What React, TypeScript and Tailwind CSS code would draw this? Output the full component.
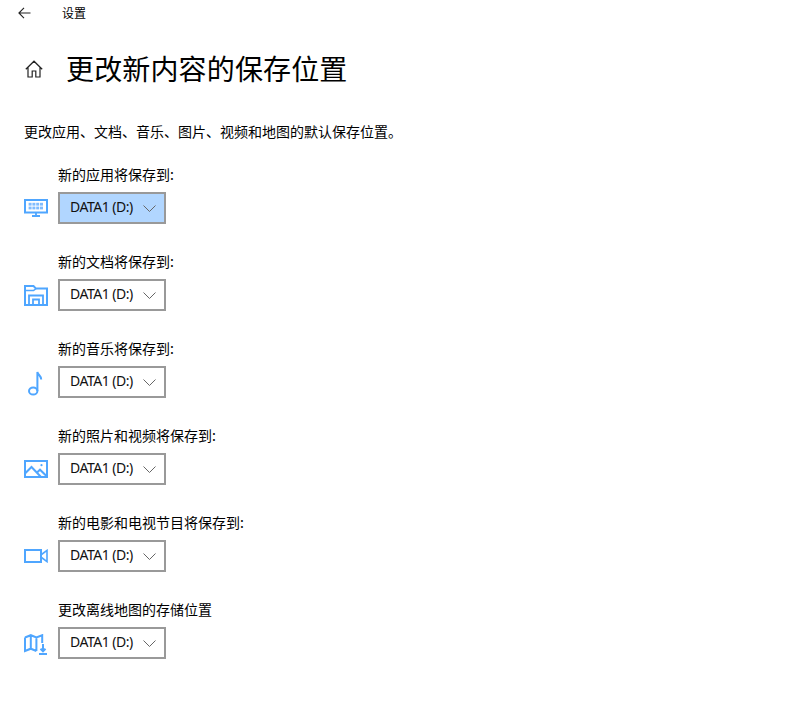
const CJK = "font-['Noto_Sans_CJK_SC','Noto_Sans',sans-serif]";

const stroke = { fill: "none", stroke: "#4fa6ff", strokeWidth: 2 };

const Pc = () => (
  <svg width="24" height="18" viewBox="0 0 24 18" fill="none">
    <rect x="1" y="1" width="22" height="12.5" stroke="#4fa6ff" strokeWidth="2" />
    <path d="M12 14v3M8 17h8" stroke="#4fa6ff" strokeWidth="1.8" />
    <g fill="#7fbcff">
      <rect x="4.6" y="3.8" width="3" height="2.8" />
      <rect x="8.4" y="3.8" width="3" height="2.8" />
      <rect x="12.2" y="3.8" width="3" height="2.8" />
      <rect x="16" y="3.8" width="3" height="2.8" />
      <rect x="4.6" y="7.6" width="3" height="2.8" />
      <rect x="8.4" y="7.6" width="3" height="2.8" />
      <rect x="12.2" y="7.6" width="3" height="2.8" />
      <rect x="16" y="7.6" width="3" height="2.8" />
    </g>
  </svg>
);
const Folder = () => (
  <svg width="24" height="21" viewBox="0 0 24 21" {...stroke}>
    <path d="M1 20V1h8.5l2.5 2.6h11V20z" />
    <path d="M1 5.6h8.5l2.5-2" strokeWidth="1.5" />
    <path d="M5 20v-9.5h14V20M9 20v-5.5h6V20" strokeWidth="1.8" />
  </svg>
);
const Music = () => (
  <svg width="15" height="25" viewBox="0 0 15 25" {...stroke}>
    <ellipse cx="5.2" cy="20" rx="4.2" ry="3.6" />
    <path d="M9.4 20V1c.4 3 3.8 3.5 3.8 7.5" />
  </svg>
);
const Picture = () => (
  <svg width="24" height="18" viewBox="0 0 24 18" {...stroke}>
    <rect x="1" y="1" width="22" height="16" />
    <path d="M1 13.5 7.5 7 17 17M13 12.5l3-2.8 7 6.8" />
    <circle cx="17.5" cy="5.2" r="1.1" fill="#4fa6ff" stroke="none" />
  </svg>
);
const Video = () => (
  <svg width="24" height="14" viewBox="0 0 24 14" {...stroke}>
    <rect x="1" y="1" width="16" height="12" />
    <path d="M17.5 5.5 23 1.4v11.2l-5.5-4.1" strokeWidth="1.6" />
  </svg>
);
const MapDown = () => (
  <svg width="24" height="21" viewBox="0 0 24 21" {...stroke} className="mt-[3px]">
    <path d="M1 3.5 6.8 1.2l5.6 2.3 5.8-2.3V9M12.4 3.5V17M6.8 1.2v13.5M12.4 17l-5.6-2.3L1 17V3.5" />
    <path d="M19 10v7M16.5 14.8l2.5 2.5 2.5-2.5M15 20h8" />
  </svg>
);

const Row = ({ label, icon, active }: { label: string; icon: React.ReactNode; active?: boolean }) => (
  <div className="flex flex-col h-[87px]">
    <div className={`${CJK} pl-[34px] text-[14px] leading-[20px] h-[20px] mb-[8px] text-black`}>{label}</div>
    <div className="flex items-center h-[32px]">
      <div className="w-[34px] flex items-center">{icon}</div>
      <div
        className={`w-[108px] h-[32px] border-2 border-[#999999] flex items-center justify-between pl-[10px] pr-[8px] ${active ? "bg-[#b1d6ff]" : "bg-white"}`}
      >
        <span className="font-['Noto_Sans',sans-serif] text-[14px] leading-[18px] pb-[2px] tracking-[-0.5px] text-[#111]">DATA1 (D:)</span>
        <svg width="13" height="7" viewBox="0 0 13 7" fill="none" stroke="#666" strokeWidth="1">
          <path d="M.5.5l6 6 6-6" />
        </svg>
      </div>
    </div>
  </div>
);

export default function App() {
  return (
    <div className={`${CJK} w-[806px] h-[712px] bg-white text-black overflow-hidden`}>
      <div className="flex items-center h-[26px] pl-[18px]">
        <svg width="13" height="12" viewBox="0 0 13 12" fill="none" stroke="#222" strokeWidth="1.1">
          <path d="M12.5 6H1M6 .8 .9 6 6 11.2" />
        </svg>
        <span className="ml-[31px] text-[12px]">设置</span>
      </div>
      <div className="flex items-center h-[56px] mt-[14px] pl-[25px]">
        <svg width="18" height="18" viewBox="0 0 18 18" fill="none" stroke="#222" strokeWidth="1.2" className="mt-[2px]">
          <path d="M.8 9.3 9 1.2l8.2 8.1M3 7.5V17h4.2v-6h3.6v6H15V7.5" />
        </svg>
        <h1 className="ml-[23px] text-[28px] leading-[40px] tracking-[0.15px] font-normal">更改新内容的保存位置</h1>
      </div>
      <p className="mt-[25px] pl-[24px] text-[14px] leading-[20px]">更改应用、文档、音乐、图片、视频和地图的默认保存位置。</p>
      <div className="mt-[23px] pl-[24px] flex flex-col">
        <Row label="新的应用将保存到:" icon={<Pc />} active />
        <Row label="新的文档将保存到:" icon={<Folder />} />
        <Row label="新的音乐将保存到:" icon={<div className="pl-[4px] pt-[2px]"><Music /></div>} />
        <Row label="新的照片和视频将保存到:" icon={<Picture />} />
        <Row label="新的电影和电视节目将保存到:" icon={<Video />} />
        <Row label="更改离线地图的存储位置" icon={<MapDown />} />
      </div>
    </div>
  );
}
